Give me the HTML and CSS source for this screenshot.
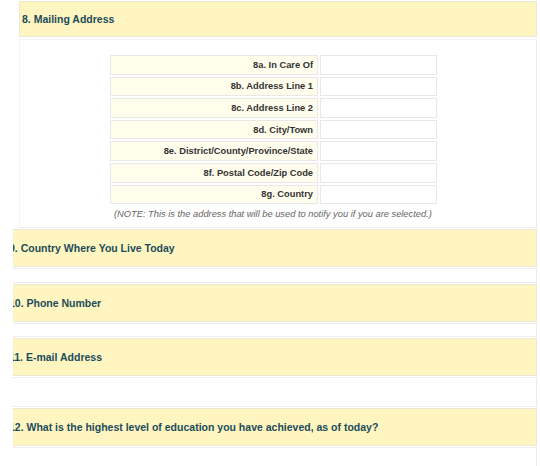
FILE: index.html
```html
<!DOCTYPE html>
<html lang="en">
<head>
  <meta charset="UTF-8">
  <title>Mailing Address</title>
  <link rel="stylesheet" href="styles.css">
</head>
<body>

<div class="section first">
  <div class="head">8. Mailing Address</div>
  <div class="content address">
    <table class="addr">
      <tr><td class="lbl">8a. In Care Of</td><td class="fld"></td></tr>
      <tr><td class="lbl">8b. Address Line 1</td><td class="fld"></td></tr>
      <tr><td class="lbl">8c. Address Line 2</td><td class="fld"></td></tr>
      <tr><td class="lbl">8d. City/Town</td><td class="fld"></td></tr>
      <tr><td class="lbl">8e. District/County/Province/State</td><td class="fld"></td></tr>
      <tr><td class="lbl">8f. Postal Code/Zip Code</td><td class="fld"></td></tr>
      <tr><td class="lbl">8g. Country</td><td class="fld"></td></tr>
    </table>
    <p class="note">(NOTE: This is the address that will be used to notify you if you are selected.)</p>
  </div>
</div>

<div class="clip">
  <div class="section shifted">
    <div class="head">9. Country Where You Live Today</div>
    <div class="content short"></div>
  </div>
  <div class="section shifted">
    <div class="head">10. Phone Number</div>
    <div class="content short"></div>
  </div>
  <div class="section shifted">
    <div class="head">11. E-mail Address</div>
    <div class="content tall"></div>
  </div>
  <div class="section shifted">
    <div class="head">12. What is the highest level of education you have achieved, as of today?</div>
    <div class="content tall"></div>
  </div>
</div>

</body>
</html>
```

FILE: styles.css
```css
* {
  box-sizing: border-box;
}

body {
  margin: 0;
  background-color: #fff;
  font-family: 'Liberation Sans', Arial, sans-serif;
  color: #333;
}

.section.first {
  width: 518px;
  margin: 1px 0 0 19px;
}

.section.first .head {
  height: 36px;
}

.head {
  height: 38px;
  padding-left: 2px;
  display: flex;
  align-items: center;
  background-color: #fff5c1;
  border: 1px solid #ebe7d2;
  color: #1c4c59;
  font-size: 10.5px;
  font-weight: bold;
  white-space: nowrap;
}

.content {
  margin: 1px 0;
  background-color: #fff;
  border: 1px solid #ececec;
}

.address {
  height: 189px;
  margin-top: 2px;
  padding-top: 13px;
  border-color: #f5f5f5 #ececec #ececec #f5f5f5;
}

.addr {
  border-collapse: separate;
  border-spacing: 2px;
  margin-left: 88px;
}

.addr td {
  height: 19.6px;
  padding: 0 4px;
  border: 1px solid #e8e8e6;
  font-size: 9.3px;
  font-weight: bold;
  color: #333;
}

.lbl {
  width: 208px;
  text-align: right;
  background-color: #fffdec;
}

.fld {
  width: 117px;
  background-color: #fff;
}

.note {
  margin: 3px 0 0 0;
  padding-left: 94px;
  font-size: 9.3px;
  font-style: italic;
  color: #666;
}

.clip {
  width: 524px;
  margin-left: 13px;
  overflow: hidden;
}

.section.shifted {
  width: 531px;
  margin-left: -7px;
}

.short {
  height: 14.5px;
}

.tall {
  height: 30px;
}
```
